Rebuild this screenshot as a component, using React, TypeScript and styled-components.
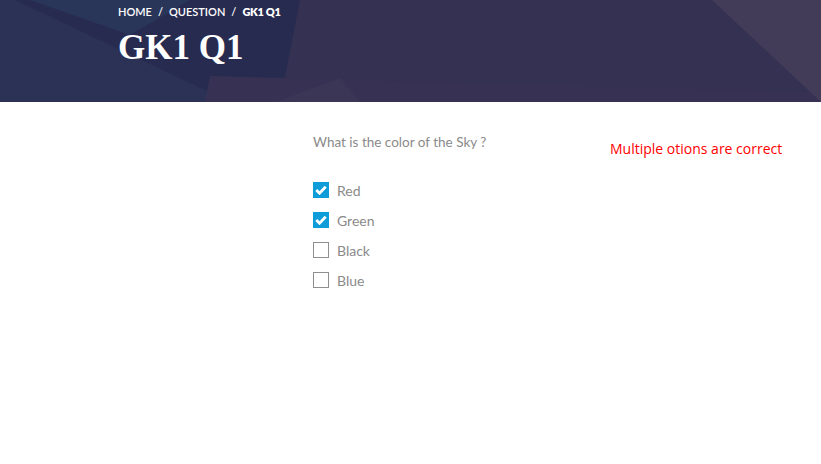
import React from "react";
import styled, { createGlobalStyle } from "styled-components";

const Global = createGlobalStyle`
  html, body { margin: 0; padding: 0; background: #fff; }
  body { font-family: Lato, "Open Sans", sans-serif; }
`;

const Header = styled.header`
  position: relative;
  height: 102px;
  overflow: hidden;
  background: #2c2d52;
`;

const HeaderArt = styled.svg`
  position: absolute;
  inset: 0;
  width: 100%;
  height: 100%;
`;

const HeaderInner = styled.div`
  position: relative;
  display: flex;
  flex-direction: column;
  padding: 5px 0 0 118px;
`;

const Crumbs = styled.nav`
  display: flex;
  align-items: center;
  gap: 6px;
  font-family: Lato, sans-serif;
  font-size: 11px;
  font-weight: 600;
  color: #fff;
  line-height: 14px;
  text-transform: uppercase;
`;

const Crumb = styled.span<{ $current?: boolean }>`
  font-weight: ${(p) => (p.$current ? 800 : 600)};
  letter-spacing: ${(p) => (p.$current ? "-0.3px" : "0")};
`;

const Title = styled.h1`
  margin: 9px 0 0;
  font-family: "Liberation Serif", "Times New Roman", serif;
  font-weight: 700;
  font-size: 35px;
  line-height: 40px;
  color: #fff;
`;

const Main = styled.main`
  display: grid;
  grid-template-columns: 313px 297px 1fr;
  padding-top: 31px;
`;

const Question = styled.section`
  grid-column: 2;
  display: flex;
  flex-direction: column;
`;

const Prompt = styled.p`
  margin: 0 0 31px;
  font-family: Lato, sans-serif;
  font-size: 13.5px;
  line-height: 18px;
  color: #8a8a8a;
`;

const Options = styled.ul`
  list-style: none;
  margin: 0;
  padding: 0;
  display: flex;
  flex-direction: column;
  gap: 14px;
`;

const Option = styled.li`
  display: flex;
  align-items: center;
  gap: 8px;
  height: 16px;
  font-family: Lato, sans-serif;
  font-size: 14px;
  color: #8a8a8a;
`;

const Box = styled.span<{ $checked?: boolean }>`
  box-sizing: border-box;
  width: 16px;
  height: 16px;
  display: flex;
  align-items: center;
  justify-content: center;
  background: ${(p) => (p.$checked ? "#0e9dd8" : "#fff")};
  border: 1px solid ${(p) => (p.$checked ? "#0e9dd8" : "#8f8f8f")};
`;

const Note = styled.p`
  grid-column: 3;
  margin: 7px 0 0;
  font-family: "Open Sans", sans-serif;
  font-size: 14px;
  line-height: 18px;
  color: #f00;
`;

const Check = () => (
  <svg width="12" height="10" viewBox="0 0 12 10">
    <path d="M1.3 5 L4.5 8.2 L10.7 1.8" fill="none" stroke="#fff" strokeWidth="2.8" />
  </svg>
);

const options = [
  { label: "Red", checked: true },
  { label: "Green", checked: true },
  { label: "Black", checked: false },
  { label: "Blue", checked: false },
];

export default function App() {
  return (
    <>
      <Global />
      <Header>
        <HeaderArt viewBox="0 0 821 102" preserveAspectRatio="none">
          <rect x="0" y="0" width="821" height="102" fill="#282b50" />
          <polygon points="300,0 821,0 821,102 280,102" fill="#343152" />
          <polygon points="0,0 15,0 230,102 0,102" fill="#2b3255" />
          <polygon points="30,0 190,0 130,35" fill="#29365a" />
          <polygon points="210,76 821,92 821,102 205,102" fill="#373254" />
          <polygon points="340,78 275,102 360,102" fill="#3b3556" />
          <polygon points="712,0 821,0 821,102" fill="#433c58" />
        </HeaderArt>
        <HeaderInner>
          <Crumbs>
            <Crumb>Home</Crumb>
            <span>/</span>
            <Crumb>Question</Crumb>
            <span>/</span>
            <Crumb $current>GK1 Q1</Crumb>
          </Crumbs>
          <Title>GK1 Q1</Title>
        </HeaderInner>
      </Header>
      <Main>
        <Question>
          <Prompt>What is the color of the Sky ?</Prompt>
          <Options>
            {options.map((o) => (
              <Option key={o.label}>
                <Box $checked={o.checked}>{o.checked && <Check />}</Box>
                {o.label}
              </Option>
            ))}
          </Options>
        </Question>
        <Note>Multiple otions are correct</Note>
      </Main>
    </>
  );
}
